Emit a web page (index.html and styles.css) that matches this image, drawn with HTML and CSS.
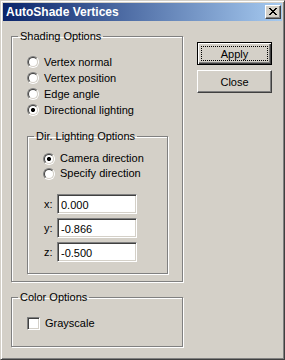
FILE: index.html
```html
<!DOCTYPE html>
<html lang="en">
<head>
  <meta charset="UTF-8" />
  <meta name="viewport" content="width=device-width, initial-scale=1.0" />
  <title>AutoShade Vertices</title>
  <link rel="stylesheet" href="styles.css">
</head>
<body>
  <div class="window">
    <div class="titlebar">
      <span class="title">AutoShade Vertices</span>
      <button class="title-close" type="button" aria-label="Close">
        <svg width="8" height="7" viewBox="0 0 8 7" shape-rendering="crispEdges">
          <path d="M0 0h2v1H0z M6 0h2v1H6z M1 1h2v1H1z M5 1h2v1H5z M2 2h4v1H2z M3 3h2v1H3z M2 4h4v1H2z M1 5h2v1H1z M5 5h2v1H5z M0 6h2v1H0z M6 6h2v1H6z" fill="#000"/>
        </svg>
      </button>
    </div>

    <div class="content">
      <div class="left">
        <!-- Shading options -->
        <fieldset class="group shading">
          <legend>Shading Options</legend>
          <div class="group-body">
            <div class="row"><span class="radio"></span>Vertex normal</div>
            <div class="row"><span class="radio"></span>Vertex position</div>
            <div class="row"><span class="radio"></span>Edge angle</div>
            <div class="row"><span class="radio on"></span>Directional lighting</div>

            <fieldset class="group dir">
              <legend>Dir. Lighting Options</legend>
              <div class="group-body dir-body">
                <div class="row short"><span class="radio on"></span>Camera direction</div>
                <div class="row short"><span class="radio"></span>Specify direction</div>

                <div class="coords">
                  <div class="coord"><span class="coord-label">x:</span><input type="text" value="0.000" /></div>
                  <div class="coord"><span class="coord-label">y:</span><input type="text" value="-0.866" /></div>
                  <div class="coord"><span class="coord-label">z:</span><input type="text" value="-0.500" /></div>
                </div>
              </div>
            </fieldset>
          </div>
        </fieldset>

        <!-- Color options -->
        <fieldset class="group color">
          <legend>Color Options</legend>
          <div class="group-body color-body">
            <div class="row check-row"><span class="checkbox"></span>Grayscale</div>
          </div>
        </fieldset>
      </div>

      <div class="right">
        <button type="button" class="btn btn-default"><span>Apply</span></button>
        <button type="button" class="btn"><span>Close</span></button>
      </div>
    </div>
  </div>
</body>
</html>
```

FILE: styles.css
```css
/* Global styles */
* {
  box-sizing: border-box;
  margin: 0;
  padding: 0;
}
body {
  font-family: 'Liberation Sans', Arial, sans-serif;
  font-size: 11px;
  line-height: 13px;
  color: #000;
  background-color: #d4d0c8;
}
.window {
  width: 285px;
  height: 360px;
  background-color: #d4d0c8;
  border: 1px solid;
  border-color: #d4d0c8 #404040 #404040 #d4d0c8;
  box-shadow: inset 1px 1px #fff, inset -1px -1px #808080;
  padding: 2px;
  display: flex;
  flex-direction: column;
}
/* Title bar */
.titlebar {
  height: 18px;
  display: flex;
  align-items: center;
  justify-content: space-between;
  padding: 0 1px 0 3px;
  background: linear-gradient(90deg, #0a246a, #a6caf0);
}
.title {
  color: #fff;
  font-weight: bold;
  font-size: 12px;
  line-height: 18px;
}
.title-close {
  width: 16px;
  height: 14px;
  background-color: #d4d0c8;
  border: 1px solid;
  border-color: #fff #404040 #404040 #fff;
  box-shadow: inset -1px -1px #808080;
  display: flex;
  align-items: center;
  justify-content: center;
  padding: 0 1px 1px 0;
}
.title-close svg {
  display: block;
}
/* Content */
.content {
  display: flex;
  padding: 9px 0 0 8px;
}
.left {
  width: 172px;
  display: flex;
  flex-direction: column;
}
.right {
  margin: 12px 0 0 14px;
  display: flex;
  flex-direction: column;
  gap: 5px;
}
/* Group boxes */
.group {
  border: 1px solid #808080;
  box-shadow: inset 1px 1px #fff, 1px 1px #fff;
  padding: 0;
  min-width: 0;
}
.group legend {
  margin-left: 6px;
  padding: 0 2px;
  line-height: 13px;
}
.group-body {
  padding: 11px 0 7px 15px;
}
.shading {
  width: 172px;
}
.row {
  height: 16px;
  display: flex;
  align-items: center;
  gap: 5px;
  white-space: nowrap;
}
.row.short {
  height: 15px;
}
.dir {
  width: 141px;
  margin-top: 12px;
}
.dir-body {
  padding: 8px 0 11px 15px;
}
.coords {
  margin-top: 13px;
  display: flex;
  flex-direction: column;
  gap: 4px;
}
.coord {
  display: flex;
  align-items: center;
  margin-left: 1px;
}
.coord-label {
  width: 13px;
}
input {
  width: 80px;
  height: 20px;
  font-family: 'Liberation Sans', Arial, sans-serif;
  font-size: 11px;
  color: #000;
  background-color: #fff;
  border: 1px solid;
  border-color: #808080 #fff #fff #808080;
  box-shadow: inset 1px 1px #404040, inset -1px -1px #d4d0c8;
  padding: 1px 0 0 3px;
  outline: none;
}
.color {
  width: 172px;
  margin-top: 9px;
}
.color-body {
  padding: 13px 0 16px 15px;
}
.check-row {
  height: 13px;
}
/* Radio button */
.radio {
  width: 12px;
  height: 12px;
  flex: none;
  border-radius: 50%;
  border: 1px solid;
  border-color: #808080 #fff #fff #808080;
  display: flex;
}
.radio::before {
  content: '';
  flex: 1;
  border-radius: 50%;
  border: 1px solid;
  border-color: #404040 #d4d0c8 #d4d0c8 #404040;
  background-color: #fff;
}
.radio.on::before {
  background: radial-gradient(circle, #000 0 2px, #fff 2.2px);
}
/* Checkbox */
.checkbox {
  width: 13px;
  height: 13px;
  flex: none;
  background-color: #fff;
  border: 1px solid;
  border-color: #808080 #fff #fff #808080;
  box-shadow: inset 1px 1px #404040, inset -1px -1px #d4d0c8;
}
/* Push buttons */
.btn {
  width: 75px;
  height: 23px;
  font-family: 'Liberation Sans', Arial, sans-serif;
  font-size: 11px;
  color: #000;
  background-color: #d4d0c8;
  border: 1px solid;
  border-color: #fff #404040 #404040 #fff;
  box-shadow: inset -1px -1px #808080;
  display: flex;
  padding: 3px;
}
.btn span {
  flex: 1;
  display: flex;
  align-items: center;
  justify-content: center;
  border: 1px solid transparent;
}
.btn-default {
  border-color: #000;
  box-shadow: inset 1px 1px #fff, inset -1px -1px #404040, inset -2px -2px #808080;
}
.btn-default span {
  border: 1px dotted #000;
}
```
